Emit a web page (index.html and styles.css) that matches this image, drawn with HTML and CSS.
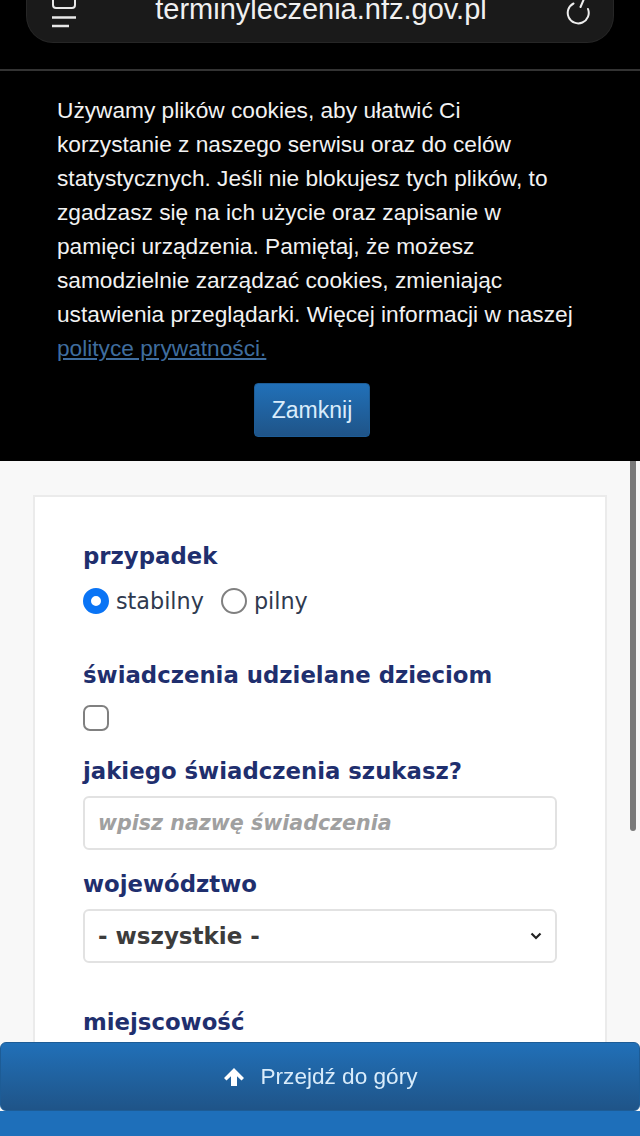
FILE: index.html
```html
<!DOCTYPE html>
<html lang="pl">
<head>
    <meta charset="UTF-8">
    <meta name="viewport" content="width=device-width, initial-scale=1.0">
    <title>Terminy leczenia</title>
    <link rel="stylesheet" href="styles.css">
</head>
<body>
    <div class="browser-bar">
        <div class="url-pill">
            <svg class="tabs-icon" width="26" height="30" viewBox="0 0 26 30" fill="none" stroke="#e8e8e8" stroke-width="2">
                <path d="M2 0v5a3 3 0 0 0 3 3h16a3 3 0 0 0 3-3V0"/>
                <path d="M1 17.500h24M1 26h17" stroke-width="2.400"/>
            </svg>
            <span class="url-text">terminyleczenia.nfz.gov.pl</span>
            <svg class="reload-icon" width="26" height="26" viewBox="0 0 26 26" fill="none" stroke="#eeeeee" stroke-width="2" stroke-linecap="round">
                <path d="M8.500 4.500A10.500 10.500 0 1 0 23 10"/>
                <path d="M18.500 1l-3 7"/>
            </svg>
        </div>
    </div>

    <div class="cookie-box">
        <p class="cookie-text">Używamy plików cookies, aby ułatwić Ci korzystanie z naszego serwisu oraz do celów statystycznych. Jeśli nie blokujesz tych plików, to zgadzasz się na ich użycie oraz zapisanie w pamięci urządzenia. Pamiętaj, że możesz samodzielnie zarządzać cookies, zmieniając ustawienia przeglądarki. Więcej informacji w naszej <a href="#">polityce prywatności.</a></p>
        <button class="btn-blue btn-close" type="button">Zamknij</button>
    </div>

    <div class="page">
        <form class="card">
            <div class="group group-case">
                <div class="label">przypadek</div>
                <div class="radio-row">
                    <span class="radio checked"></span><span class="radio-label">stabilny</span>
                    <span class="radio"></span><span class="radio-label">pilny</span>
                </div>
            </div>
            <div class="group group-kids">
                <div class="label">świadczenia udzielane dzieciom</div>
                <span class="checkbox"></span>
            </div>
            <div class="group group-search">
                <div class="label">jakiego świadczenia szukasz?</div>
                <div class="field placeholder">wpisz nazwę świadczenia</div>
            </div>
            <div class="group group-region">
                <div class="label">województwo</div>
                <div class="field select">
                    <span>- wszystkie -</span>
                    <svg width="12" height="8" viewBox="0 0 12 8" fill="none" stroke="#222" stroke-width="2.200">
                        <path d="M1.500 1.500L6 6l4.500-4.500"/>
                    </svg>
                </div>
            </div>
            <div class="label">miejscowość</div>
        </form>
    </div>

    <div class="scrollbar"></div>

    <div class="bottom">
        <button class="btn-blue btn-top" type="button">
            <svg width="22" height="20" viewBox="0 0 22 20" fill="#ffffff">
                <path d="M11 1L21 11l-2.500 2.500-4.500-4.300V19H8V9.200l-4.500 4.300L1 11z"/>
            </svg>
            Przejdź do góry
        </button>
        <div class="bottom-bar"></div>
    </div>
</body>
</html>
```

FILE: styles.css
```css
* {
    margin: 0;
    padding: 0;
    box-sizing: border-box;
}

html, body {
    height: 1136px;
    overflow: hidden;
}

body {
    font-family: "Liberation Sans", Arial, sans-serif;
    background: #f8f8f8;
    position: relative;
}

.browser-bar {
    background: #000;
    height: 71px;
    border-bottom: 2px solid #333;
    padding: 0 27px;
}

.url-pill {
    height: 42px;
    background: #1a1a1a;
    border-radius: 0 0 26px 26px;
    box-shadow: 0 0 0 1px #262626;
    color: #f0f0f0;
    font-size: 29px;
    display: flex;
    align-items: flex-start;
    justify-content: space-between;
    padding: 0 22px 0 24px;
}

.url-text {
    line-height: 30px;
    margin-top: -6px;
}

.reload-icon {
    margin-top: -1px;
}

.cookie-box {
    background: #000;
    height: 390px;
    padding: 22px 57px 0;
    text-align: center;
}

.cookie-text {
    color: #f2f2f2;
    font-size: 22.700px;
    line-height: 34px;
    text-align: left;
    width: 522px;
}

.cookie-text a {
    color: #3f6d9e;
    text-decoration: underline;
}

.btn-blue {
    font-family: inherit;
    color: #d9ecfb;
    background: linear-gradient(#2170b8, #1f5488);
    border: 1px solid #1d5c96;
    border-radius: 4px;
}

.btn-close {
    display: block;
    width: 116px;
    height: 54px;
    margin: 18px 0 0 197px;
    font-size: 23px;
}

.page {
    padding: 34px 33px 0;
}

.card {
    background: #fff;
    border: 2px solid #ebebeb;
    width: 574px;
    height: 600px;
    padding: 44px 48px 0;
}

.label {
    color: #1f2f6e;
    font-family: "DejaVu Sans", Verdana, sans-serif;
    font-weight: bold;
    font-size: 22.800px;
    line-height: 30px;
}

.group-case {
    margin-bottom: 44px;
}

.group-kids {
    margin-bottom: 25px;
}

.group-search {
    margin-bottom: 19px;
}

.group-region {
    margin-bottom: 44px;
}

.radio-row {
    display: flex;
    align-items: center;
    margin-top: 15px;
    height: 30px;
    color: #2f3a4f;
    font-family: "DejaVu Sans", Verdana, sans-serif;
    font-size: 22.300px;
}

.radio {
    width: 26px;
    height: 26px;
    border: 2px solid #808080;
    border-radius: 50%;
    flex-shrink: 0;
    background: #fff;
}

.radio.checked {
    border: 8px solid #0a74f5;
}

.radio-label {
    margin: 0 17px 0 7px;
}

.checkbox {
    display: block;
    width: 26px;
    height: 26px;
    margin-top: 15px;
    border: 2px solid #808080;
    border-radius: 7px;
}

.field {
    width: 474px;
    height: 54px;
    margin-top: 10px;
    border: 2px solid #e2e2e2;
    border-radius: 6px;
    background: #fff;
    font-family: "DejaVu Sans", Verdana, sans-serif;
    font-weight: bold;
    display: flex;
    align-items: center;
    padding: 0 13px;
}

.placeholder {
    color: #a0a0a0;
    font-size: 20.600px;
    font-style: italic;
}

.select {
    justify-content: space-between;
    color: #3c3c3c;
    font-size: 23px;
}

.scrollbar {
    position: absolute;
    left: 630px;
    top: 461px;
    width: 6px;
    height: 370px;
    background: #7a7a7a;
    border-radius: 0 0 3px 3px;
}

.bottom {
    position: fixed;
    left: 0;
    right: 0;
    top: 1042px;
}

.btn-top {
    display: flex;
    width: 100%;
    height: 69px;
    border-radius: 6px;
    font-size: 22.600px;
    align-items: center;
    justify-content: center;
    gap: 16px;
}

.bottom-bar {
    height: 25px;
    background: #1e6fba;
}
```
